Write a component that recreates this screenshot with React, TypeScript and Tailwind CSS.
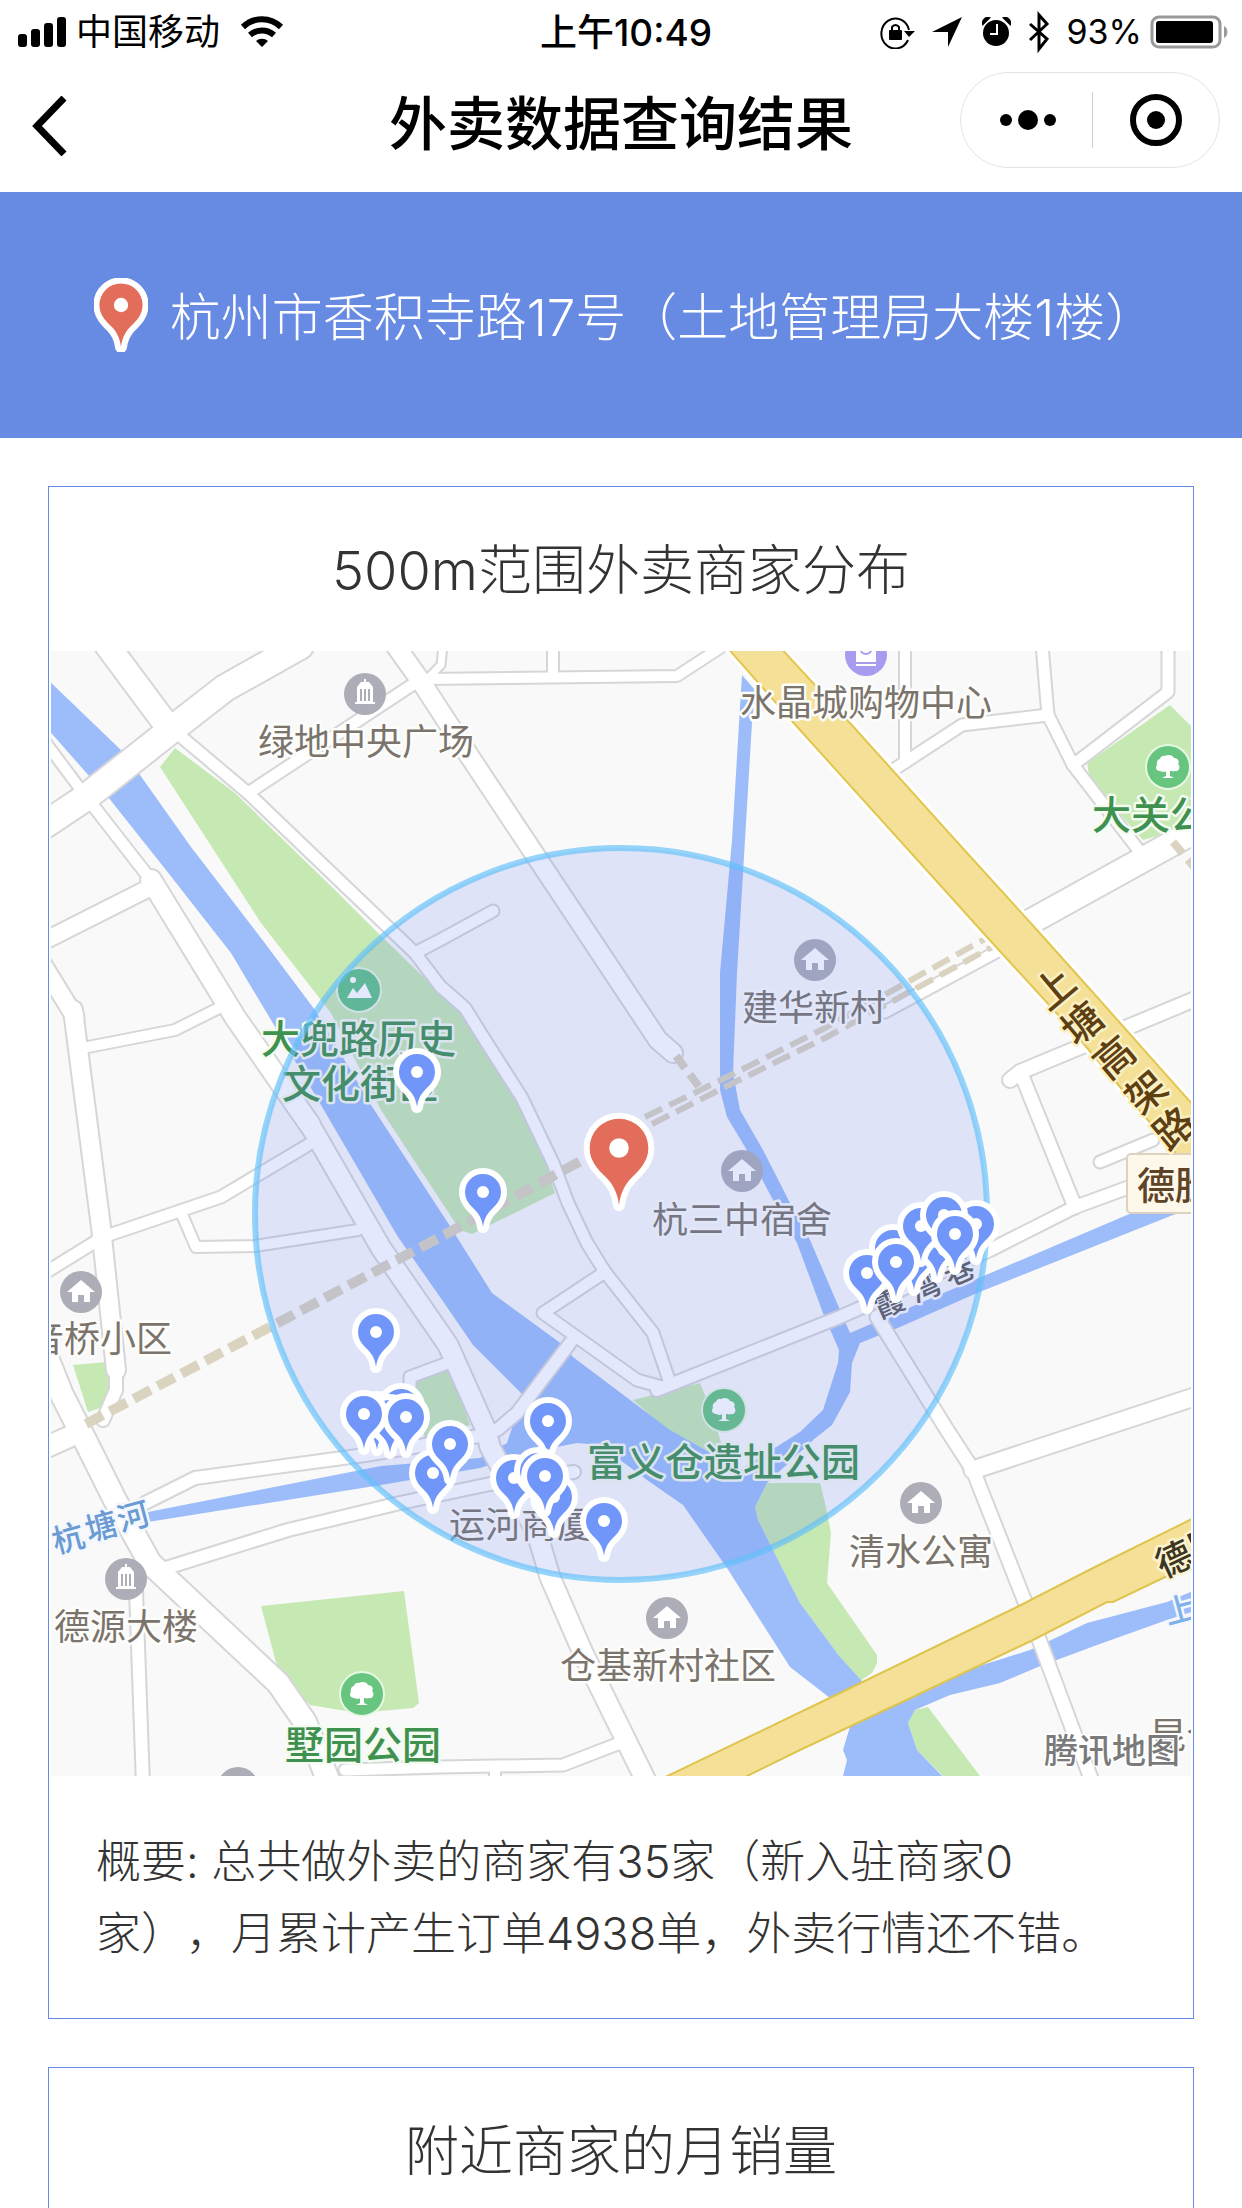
import React from "react";

const FONT = "font-[Inter,'Noto_Sans_CJK_SC',sans-serif]";
const PIN = "M0 35C-1 27-4 22-8 18C-13 13-18 8-18 0A18 18 0 0 1 18 0C18 8 13 13 8 18C4 22 1 27 0 35Z";

function Pin({ x, y, s = 1, fill = "#7196fa" }: { x: number; y: number; s?: number; fill?: string }) {
  return (
    <g transform={`translate(${x} ${y}) scale(${s})`}>
      <path d={PIN} fill={fill} stroke="#fff" strokeWidth={12 / s} strokeLinejoin="round" />
      <path d={PIN} fill={fill} />
      <circle r={6} fill="#fff" />
    </g>
  );
}

type Road = [string, number];
const roads: Road[] = [
  ["M40 828L85 798L171 730L225 688L300 646", 28],
  ["M107 645L165 723", 26],
  ["M165 723L185 740L248 793L415 953L440 986L465 1008L485 1040L522 1098L553 1163L568 1203L587 1243L605 1272L653 1333L670 1383", 13],
  ["M248 793L415 683", 13],
  ["M395 645L420 680L470 757L658 1040L673 1053", 20],
  ["M425 679L677 676L720 648", 12],
  ["M443 645L441 665L428 678", 9],
  ["M553 645V676", 12],
  ["M905 645V763", 12],
  ["M890 772L962 725L1048 715", 13],
  ["M1042 645L1048 715L1073 765L1137 848", 13],
  ["M1168 645V692L1073 765", 13],
  ["M1030 922L1200 828", 26],
  ["M885 1012L1000 950", 13],
  ["M1010 1080L1020 1072L1200 997", 16],
  ["M1022 1076L1075 1207", 15],
  ["M657 1390L840 1317L990 1250L1075 1207L1127 1188L1200 1162", 14],
  ["M605 1272L543 1313L637 1380L662 1387", 13],
  ["M570 1343L517 1413L497 1430", 14],
  ["M1100 1162L1153 1140", 13],
  ["M877 1317L947 1430L973 1470L1027 1607L1090 1776L1094 1785", 15],
  ["M973 1470L1200 1395", 19],
  ["M91 803L151 880", 13],
  ["M151 880L235 1017L310 1125", 22],
  ["M310 1125L381 1248L448 1345L486 1430L490 1447L537 1533L550 1577L583 1653L648 1785", 21],
  ["M40 943L151 887", 18],
  ["M40 735L81 790", 12],
  ["M40 960L75 1017", 19],
  ["M73 1010L101 1227L116 1370", 20],
  ["M116 1363V1390L103 1420", 14],
  ["M225 1005L175 1030L88 1047", 12],
  ["M40 1276L103 1237L221 1197L308 1145", 13],
  ["M183 1217L196 1247L255 1246L358 1230", 12],
  ["M46 1355L62 1395L85 1440L115 1500L150 1563L278 1683L305 1722L330 1785", 24],
  ["M40 1450L80 1432", 22],
  ["M145 1503L195 1478L365 1455L485 1435", 14],
  ["M166 1568L288 1530L400 1503L490 1484L574 1472", 14],
  ["M136 1590L143 1785", 14],
  ["M345 1770L440 1767L563 1765L620 1743", 13],
  ["M495 1767V1785", 12],
  ["M445 1364L410 1377V1388", 13],
  ["M493 911L440 940L415 953", 13],
];

const greens = [
  "160,767 175,748 235,793 335,890 378,933 440,993 460,1013 477,1040 517,1100 547,1167 555,1193 490,1225 472,1234 460,1230 381,1110 331,1013 261,923",
  "1170,705 1195,730 1195,825 1143,840 1090,780 1087,763",
  "73,1365 106,1362 110,1390 103,1407 88,1412",
  "261,1606 404,1591 419,1703 413,1708 358,1713 310,1705 278,1670",
  "633,1400 700,1383 707,1400 722,1445 740,1470 673,1435",
  "767,1483 755,1507 758,1520 773,1550 800,1603 840,1657 857,1683 872,1673 877,1663 877,1655 827,1583 831,1533 825,1503 820,1483",
  "928,1707 980,1776 943,1776 917,1750 908,1723 915,1710",
  "416,1380 449,1367 470,1425 425,1440",
];

const waters = [
  "45,677 123,752 140,775 191,847 261,938 315,1010 371,1105 448,1223 492,1293 563,1345 573,1357 670,1430 700,1447 740,1470 795,1440 813,1440 767,1483 755,1507 758,1520 773,1550 800,1603 840,1657 870,1690 830,1698 790,1667 727,1568 683,1505 647,1480 600,1445 577,1443 527,1453 480,1468 381,1485 148,1522 148,1512 381,1466 480,1458 507,1443 523,1395 473,1345 440,1297 398,1237 321,1105 271,1020 231,953 166,870 108,797 90,777 45,726",
  "742,675 755,690 752,723 737,973 733,1073 740,1110 763,1150 790,1203 810,1240 837,1303 850,1333 967,1283 1127,1215 1195,1190 1195,1207 1173,1215 977,1293 900,1327 860,1343 852,1363 850,1392 832,1425 813,1440 780,1470 740,1470 800,1432 823,1410 838,1363 839,1350 823,1313 797,1243 773,1200 745,1147 727,1117 720,1090 720,973 732,840 740,707",
  "852,1720 843,1750 847,1760 842,1780 946,1780 917,1750 908,1723 915,1710 950,1695 1000,1683 1038,1667 1097,1645 1167,1620 1195,1611 1195,1590 1167,1602 1087,1623 1030,1650 973,1668 900,1690",
];

type Label = [string, number, number];
const labels: Label[] = [
  ["绿地中央广场", 258, 755],
  ["水晶城购物中心", 740, 716],
  ["建华新村", 742, 1021],
  ["杭三中宿舍", 652, 1233],
  ["音桥小区", 28, 1352],
  ["运河商厦", 449, 1538],
  ["清水公寓", 849, 1565],
  ["仓基新村社区", 560, 1679],
  ["德源大楼", 54, 1640],
  ["昆仑", 1150, 1749],
];
const parkLabels: Label[] = [
  ["大关公园", 1092, 829],
  ["大兜路历史", 261, 1053],
  ["文化街区", 282, 1098],
  ["富义仓遗址公园", 587, 1476],
  ["墅园公园", 285, 1759],
];

const houses = [[815, 960], [81, 1292], [742, 1171], [667, 1618], [921, 1503], [238, 1788]];
const buildings = [[365, 694], [126, 1579]];
const trees = [[1168, 767], [724, 1410], [362, 1694]];

const pins = [
  [417, 1072], [483, 1192], [376, 1332],
  [377, 1415], [401, 1407], [390, 1418], [364, 1414], [406, 1417], [433, 1473], [450, 1444],
  [548, 1421], [554, 1497], [514, 1478], [538, 1471], [545, 1476], [604, 1521],
  [914, 1255], [937, 1242], [893, 1248], [867, 1273], [896, 1262],
  [921, 1226], [976, 1224], [944, 1215], [955, 1234],
];

function Turned({ t, x, y, a, size, fill, halo }: { t: string; x: number; y: number; a: number; size: number; fill: string; halo: string }) {
  return (
    <text
      transform={`translate(${x} ${y}) rotate(${a})`}
      y={Math.round(size * 0.37)}
      textAnchor="middle"
      fontSize={size}
      fontWeight={500}
      fill={fill}
      stroke={halo}
      strokeWidth={5}
      paintOrder="stroke"
      strokeLinejoin="round"
    >
      {t}
    </text>
  );
}

function Map() {
  return (
    <svg viewBox="51 651 1140 1125" className={`block w-full ${FONT}`} role="img" aria-label="500m范围外卖商家分布地图">
      <rect x="51" y="651" width="1140" height="1125" fill="#f9f9f9" />
      <g fill="#c6e9b4">{greens.map((p) => <polygon key={p} points={p} />)}</g>
      <g fill="#9cbdf9">{waters.map((p) => <polygon key={p} points={p} />)}</g>
      <g fill="none" stroke="#d6d6d8" strokeLinejoin="round">
        {roads.map(([d, w]) => <path key={d} d={d} strokeWidth={w + 2} strokeLinecap="round" />)}
      </g>
      <g fill="none" stroke="#fff" strokeLinejoin="round">
        {roads.map(([d, w]) => <path key={d} d={d} strokeWidth={w - 2} strokeLinecap="round" />)}
      </g>
      <g fill="none" stroke="#d9d3c0">
        <path d="M86 1424L448 1233L645 1126" strokeWidth="10" strokeDasharray="19 8" />
        <path d="M645 1117L727 1077L823 1029L985 939" strokeWidth="6" strokeDasharray="19 8" />
        <path d="M652 1124L731 1084L827 1037L992 947" strokeWidth="6" strokeDasharray="19 8" />
        <path d="M676 1056L703 1092" strokeWidth="8" strokeDasharray="15 8" />
        <path d="M1173 842L1195 868" strokeWidth="8" strokeDasharray="15 8" />
      </g>
      <path d="M725 645L800 730L987 937L1072 1030L1200 1182L1200 1113L1097 997L1037 930L958 843L850 723L778 645Z" fill="#f4e197" stroke="#fff" strokeWidth="8" />
      <path d="M725 645L800 730L987 937L1072 1030L1200 1182L1200 1113L1097 997L1037 930L958 843L850 723L778 645Z" fill="#f4e197" stroke="#e2c64f" strokeWidth="2" />
      <path d="M655 1782L840 1693L1017 1607L1093 1568L1200 1515V1560L1163 1578L1113 1602L1107 1602L1033 1640L917 1695L800 1750L735 1782Z" fill="#f4e197" stroke="#dfc44f" strokeWidth="2" />

      <g fill="#adadb8">
        {[...houses, ...buildings].map(([x, y]) => <circle key={`${x}-${y}`} cx={x} cy={y} r="21" />)}
      </g>
      {houses.map(([x, y]) => (
        <path key={`${x}-${y}`} transform={`translate(${x} ${y})`} d="M0-12L14 0H9V10H3V3H-3V10H-9V0H-14Z" fill="#fff" />
      ))}
      {buildings.map(([x, y]) => (
        <g key={`${x}-${y}`} transform={`translate(${x} ${y})`} fill="#fff">
          <path d="M-8-7L-4-12H-1V-15H1V-12H4L8-7V8H10V10H-10V8H-8Z" />
          <path d="M-4-5V7M0-5V7M4-5V7" stroke="#adadb8" strokeWidth="2" />
        </g>
      ))}
      {trees.map(([x, y]) => (
        <g key={`${x}-${y}`} transform={`translate(${x} ${y})`} fill="#fff">
          <circle r="22" fill="#67c580" stroke="#e8f7e2" strokeWidth="2" />
          <path d="M-3-11C0-13 5-12 6-9C10-9 12-5 10-3C13 0 11 5 7 4C5 5 3 4 2 4V9L6 11H-6L-2 9V4C-4 6-7 4-8 4C-12 4-13 0-11-2C-12-5-10-8-8-8C-8-10-5-12-3-11Z" />
        </g>
      ))}
      <g transform="translate(359 990)" fill="#fff">
        <circle r="22" fill="#5fc387" stroke="#e8f7e2" strokeWidth="2" />
        <circle cx="-6" cy="-10" r="3" />
        <path d="M-12 8L-6-2L-2 3L6-7L13 8Z" />
      </g>
      <g transform="translate(866 655)">
        <circle r="21" fill="#a79cf0" />
        <path d="M-10-12H10V7H-10ZM-10 9H10V11H-10Z" fill="#fff" />
        <path d="M-5-5A5 4 0 0 0 5-5" fill="none" stroke="#a79cf0" strokeWidth="2" />
      </g>

      <rect x="1127" y="1154" width="90" height="59" rx="4" fill="#fdf8ea" stroke="#ddd2c0" strokeWidth="2" />
      <text x="1137" y="1199" fontSize="38" fontWeight="500" fill="#5e4326">德胜</text>

      <g fontSize="36" fill="#7b746c" stroke="#fdfdfb" strokeWidth="5" paintOrder="stroke" strokeLinejoin="round">
        {labels.map(([t, x, y]) => <text key={t} x={x} y={y}>{t}</text>)}
      </g>
      <g fontSize="39" fill="#3f9150" stroke="#f4fbf0" strokeWidth="5" paintOrder="stroke" strokeLinejoin="round" fontWeight="500">
        {parkLabels.map(([t, x, y]) => <text key={t} x={x} y={y}>{t}</text>)}
      </g>
      {([["上", 1054, 988], ["塘", 1082, 1023], ["高", 1114, 1057], ["架", 1146, 1092], ["路", 1174, 1128]] as const).map(([t, x, y]) => (
        <Turned key={t} t={t} x={x} y={y} a={-40} size={40} fill="#5e3f12" halo="#fbf0c4" />
      ))}
      {([["杭", 68, 1538], ["塘", 101, 1526], ["河", 133, 1516]] as const).map(([t, x, y]) => (
        <Turned key={t} t={t} x={x} y={y} a={-15} size={32} fill="#6b9bd3" halo="#f4f8fd" />
      ))}
      {([["霞", 889, 1303], ["湾", 925, 1287], ["巷", 959, 1271]] as const).map(([t, x, y]) => (
        <Turned key={t} t={t} x={x} y={y} a={-24} size={30} fill="#5d5d60" halo="#fafafa" />
      ))}
      <Turned t="德" x={1174} y={1559} a={-25} size={36} fill="#3d3523" halo="#fbf3cf" />
      <Turned t="胜" x={1207} y={1543} a={-25} size={36} fill="#3d3523" halo="#fbf3cf" />
      <Turned t="上" x={1180} y={1609} a={-15} size={32} fill="#7fb0ea" halo="#f4f8fd" />

      <circle cx="621" cy="1214" r="366" fill="#6482f0" fillOpacity="0.18" stroke="#5fc0fb" strokeOpacity="0.66" strokeWidth="6" />
      <text x="1044" y="1763" fontSize="34" fontWeight="500" fill="#7a7a7a" stroke="#fff" strokeWidth="3" paintOrder="stroke">腾讯地图</text>

      {pins.map(([x, y]) => <Pin key={`${x}-${y}`} x={x} y={y} />)}
      <Pin x={619} y={1148} s={1.63} fill="#e26d5a" />
    </svg>
  );
}

function StatusBar() {
  return (
    <div className="grid h-15 grid-cols-[1fr_auto_1fr] items-center pt-1 pr-[14px] pl-4 text-[36px] leading-none">
      <div className="flex items-center">
        <svg width="50" height="30" viewBox="0 0 50 30" aria-hidden="true">
          <rect x="2" y="17" width="9" height="13" rx="3" />
          <rect x="15" y="12" width="9" height="18" rx="3" />
          <rect x="28" y="6" width="9" height="24" rx="3" />
          <rect x="41" y="0" width="9" height="30" rx="3" />
        </svg>
        <span className="ml-[10px]">中国移动</span>
        <svg className="ml-5" width="44" height="32" viewBox="0 0 44 32" fill="none" stroke="#000" aria-hidden="true">
          <path d="M3 11A27 27 0 0 1 41 11" strokeWidth="6" />
          <path d="M10 19A18 18 0 0 1 34 19" strokeWidth="6" />
          <path d="M22 31L16 25A9 9 0 0 1 28 25Z" fill="#000" stroke="none" />
        </svg>
      </div>
      <div className="pl-2 text-[37px] font-medium">上午10:49</div>
      <div className="flex items-center justify-end">
        <svg width="36" height="34" viewBox="0 0 36 34" fill="none" stroke="#000" strokeWidth="2" aria-hidden="true">
          <path d="M28 25A14 15 0 1 1 29 15" />
          <path d="M24 16H35L29 22Z" fill="#000" stroke="none" />
          <rect x="9" y="15" width="13" height="10" rx="1" fill="#000" stroke="none" />
          <path d="M12 16V12A4 4 0 0 1 19 12V16" />
        </svg>
        <svg className="ml-4" width="30" height="30" viewBox="0 0 30 30" aria-hidden="true">
          <path d="M30 0L16 30V15H0Z" />
        </svg>
        <svg className="ml-5" width="29" height="30" viewBox="0 0 29 30" aria-hidden="true">
          <circle cx="14" cy="16" r="13" />
          <path d="M1 7A5 5 0 0 1 7 1ZM28 7A5 5 0 0 0 22 1Z" stroke="#000" strokeWidth="2" />
          <path d="M15 7V17H8" fill="none" stroke="#fff" strokeWidth="2" />
        </svg>
        <svg className="ml-4" width="24" height="42" viewBox="0 0 24 42" fill="none" stroke="#000" strokeWidth="3" aria-hidden="true">
          <path d="M3 13L20 28L12 38V4L20 13L3 29" />
        </svg>
        <span className="ml-4 text-[34px]">93%</span>
        <svg className="ml-2" width="78" height="34" viewBox="0 0 78 34" aria-hidden="true">
          <rect x="2" y="2" width="68" height="30" rx="7" fill="none" stroke="#999" strokeWidth="3" />
          <rect x="6" y="6" width="57" height="22" rx="3" />
          <path d="M74 11A7 7 0 0 1 74 23Z" fill="#999" />
        </svg>
      </div>
    </div>
  );
}

function NavBar() {
  return (
    <div className="grid h-33 grid-cols-[1fr_auto_1fr] items-start px-[22px] pt-3">
      <button type="button" aria-label="返回" className="flex h-24 w-18 items-center pt-3 pl-[10px]">
        <svg width="36" height="60" viewBox="0 0 36 60" fill="none" stroke="#000" strokeWidth="7" aria-hidden="true">
          <path d="M32 2L5 30L32 58" />
        </svg>
      </button>
      <h1 className="flex h-26 items-center text-[58px] leading-none font-medium">外卖数据查询结果</h1>
      <div className="flex h-24 w-65 items-center justify-self-end rounded-full border border-[#e4e4e4]">
        <button type="button" aria-label="更多" className="flex flex-1 justify-center pl-1">
          <svg width="58" height="24" viewBox="0 0 58 24" aria-hidden="true">
            <circle cx="7" cy="12" r="6" />
            <circle cx="29" cy="12" r="10" />
            <circle cx="51" cy="12" r="6" />
          </svg>
        </button>
        <span className="h-14 w-px bg-[#d0d0d0]" />
        <button type="button" aria-label="关闭" className="flex flex-1 justify-center">
          <svg width="52" height="52" viewBox="0 0 52 52" aria-hidden="true">
            <circle cx="26" cy="26" r="23" fill="none" stroke="#000" strokeWidth="6" />
            <circle cx="26" cy="26" r="9" />
          </svg>
        </button>
      </div>
    </div>
  );
}

export default function App() {
  return (
    <div className={`h-screen overflow-hidden bg-white text-black ${FONT}`}>
      <header>
        <StatusBar />
        <NavBar />
      </header>
      <section className="flex h-[246px] items-center justify-center bg-[#678ae3] pl-2 font-light text-white">
        <svg width="54" height="74" viewBox="-27 -27 54 74" className="mr-[22px]" aria-hidden="true">
          <Pin x={0} y={0} s={1.2} fill="#e26d5a" />
        </svg>
        <p className="pt-1 text-[51px] leading-none">杭州市香积寺路17号（土地管理局大楼1楼）</p>
      </section>
      <main className="flex flex-col gap-12 px-12 pt-12 text-[#333]">
        <section className="border border-[#678ae3] px-[2px]">
          <h2 className="pt-[58px] pb-[54px] text-center text-[54px] leading-[52px] font-light">500m范围外卖商家分布</h2>
          <Map />
          <p className="px-[45px] pt-[50px] pb-12 text-[45px] leading-[72px] font-light [text-spacing-trim:space-all]">
            概要: 总共做外卖的商家有35家（新入驻商家0
            <br />
            家），月累计产生订单4938单，外卖行情还不错。
          </p>
        </section>
        <section className="border border-[#678ae3] px-[2px] pb-14">
          <h2 className="pt-[58px] pb-[54px] text-center text-[54px] leading-[52px] font-light">附近商家的月销量</h2>
        </section>
      </main>
    </div>
  );
}
